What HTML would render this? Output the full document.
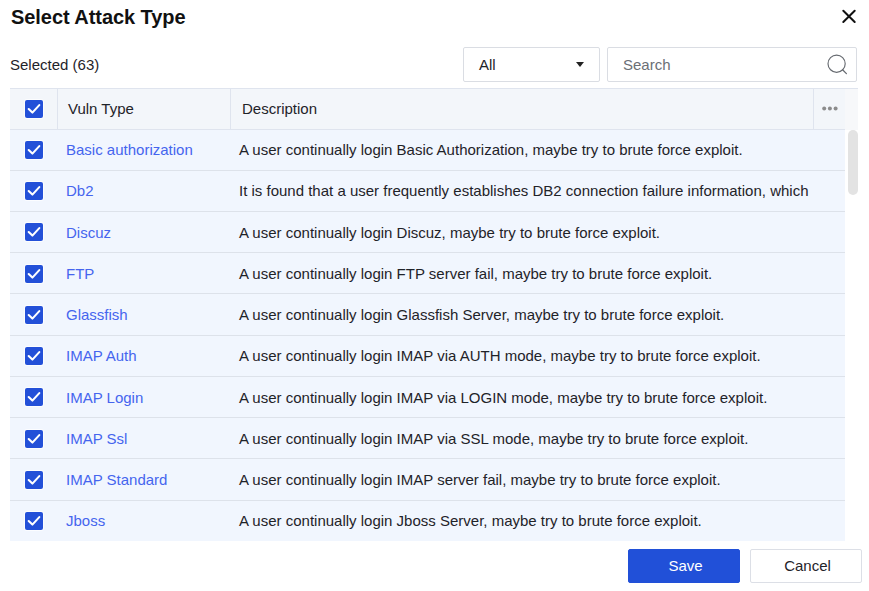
<!DOCTYPE html>
<html><head><meta charset="utf-8">
<style>
*{box-sizing:border-box;margin:0;padding:0}
html,body{width:869px;height:591px;overflow:hidden;background:#fff;font-family:"Liberation Sans",sans-serif;color:#1f2329}
div,svg{position:absolute}
.title{left:11px;top:5px;font-size:20px;font-weight:bold;color:#111;line-height:24px;white-space:nowrap;letter-spacing:-0.06px}
.sel{left:10px;top:57px;font-size:15px;line-height:16px;color:#1f2329;white-space:nowrap}
.dd{left:463px;top:47px;width:137px;height:35px;border:1px solid #dadde3;border-radius:2px}
.dd span{position:absolute;left:15px;top:9px;font-size:15px;line-height:16px;color:#1f2329}
.dd i{position:absolute;left:112px;top:14px;width:0;height:0;border-left:4px solid transparent;border-right:4px solid transparent;border-top:5px solid #222}
.search{left:607px;top:47px;width:250px;height:35px;border:1px solid #dadde3;border-radius:2px}
.search span{position:absolute;left:15px;top:9px;font-size:15px;line-height:16px;color:#6b6f76}
.hdr{left:10px;top:88px;width:835px;height:42px;background:#f3f6fa;border-top:1px solid #dfe4ee;border-bottom:1px solid #dfe4ee}
.gut{left:845px;top:88px;width:13px;height:42px;background:#f7f8fa;border-top:1px solid #dfe4ee}
.vs{top:89px;width:1px;height:40px;background:#dfe4ee}
.row{left:10px;width:835px;background:#f1f6fe;border-bottom:1px solid #dde2ea}
.cb{left:25px;width:18px;height:18px;background:#2350d8;border-radius:2px;box-shadow:0 0 0 1px rgba(255,255,255,.75)}
.cb svg{left:0;top:0}
.t{font-size:15px;line-height:16px;white-space:nowrap}
.vt{left:66px;color:#4565ee}
.ds{left:239px;color:#1f2329}
.sb{left:848px;top:130px;width:10px;height:65px;background:#e3e3e3;border-radius:5px}
.btn{top:549px;height:34px;width:112px;border-radius:2px;font-size:15px;line-height:32px;text-align:center;padding-left:3px}
.save{left:628px;background:#2150d8;color:#fff;border:1px solid #2150d8}
.cancel{left:750px;background:#fff;color:#1f2329;border:1px solid #dcdfe6}
</style></head><body>
<div class="title">Select Attack Type</div>
<svg style="left:838px;top:4px" width="22" height="22" viewBox="0 0 22 22"><path d="M5.3 6.8L16.7 18M16.7 6.8L5.3 18" stroke="#111" stroke-width="2" stroke-linecap="round"/></svg>
<div class="sel">Selected (63)</div>
<div class="dd"><span>All</span><i></i></div>
<div class="search"><span>Search</span></div>
<svg style="left:820px;top:48px" width="40" height="32" viewBox="0 0 40 32"><circle cx="16.6" cy="15.7" r="8.6" fill="none" stroke="#666a70" stroke-width="1.15"/><path d="M22.6 21.8L26.4 25.6" stroke="#666a70" stroke-width="1.25" stroke-linecap="round"/></svg>
<div class="hdr"></div>
<div class="gut"></div>
<div class="vs" style="left:57px"></div>
<div class="vs" style="left:230px"></div>
<div class="vs" style="left:813px"></div>
<div class="cb" style="top:100px"><svg width="18" height="18" viewBox="0 0 18 18"><path d="M3.7 9.0L7.4 12.6L14.3 5.1" fill="none" stroke="#fff" stroke-width="2.1" stroke-linecap="round" stroke-linejoin="round"/></svg></div>
<div class="t" style="left:68px;top:101px;color:#1f2329">Vuln Type</div>
<div class="t" style="left:242px;top:101px;color:#1f2329">Description</div>
<svg style="left:820px;top:104px" width="20" height="9" viewBox="0 0 20 9"><circle cx="4.2" cy="4.4" r="2" fill="#8c8c8c"/><circle cx="9.9" cy="4.4" r="2" fill="#8c8c8c"/><circle cx="15.6" cy="4.4" r="2" fill="#8c8c8c"/></svg>
<div class="row" style="top:130px;height:41px"></div>
<div class="cb" style="top:141px"><svg width="18" height="18" viewBox="0 0 18 18"><path d="M3.7 9.0L7.4 12.6L14.3 5.1" fill="none" stroke="#fff" stroke-width="2.1" stroke-linecap="round" stroke-linejoin="round"/></svg></div>
<div class="t vt" style="top:142px">Basic authorization</div><div class="t ds" style="top:142px">A user continually login Basic Authorization, maybe try to brute force exploit.</div>
<div class="row" style="top:171px;height:41px"></div>
<div class="cb" style="top:182px"><svg width="18" height="18" viewBox="0 0 18 18"><path d="M3.7 9.0L7.4 12.6L14.3 5.1" fill="none" stroke="#fff" stroke-width="2.1" stroke-linecap="round" stroke-linejoin="round"/></svg></div>
<div class="t vt" style="top:183px">Db2</div><div class="t ds" style="top:183px">It is found that a user frequently establishes DB2 connection failure information, which</div>
<div class="row" style="top:212px;height:41px"></div>
<div class="cb" style="top:223px"><svg width="18" height="18" viewBox="0 0 18 18"><path d="M3.7 9.0L7.4 12.6L14.3 5.1" fill="none" stroke="#fff" stroke-width="2.1" stroke-linecap="round" stroke-linejoin="round"/></svg></div>
<div class="t vt" style="top:225px">Discuz</div><div class="t ds" style="top:225px">A user continually login Discuz, maybe try to brute force exploit.</div>
<div class="row" style="top:253px;height:41px"></div>
<div class="cb" style="top:265px"><svg width="18" height="18" viewBox="0 0 18 18"><path d="M3.7 9.0L7.4 12.6L14.3 5.1" fill="none" stroke="#fff" stroke-width="2.1" stroke-linecap="round" stroke-linejoin="round"/></svg></div>
<div class="t vt" style="top:266px">FTP</div><div class="t ds" style="top:266px">A user continually login FTP server fail, maybe try to brute force exploit.</div>
<div class="row" style="top:294px;height:42px"></div>
<div class="cb" style="top:306px"><svg width="18" height="18" viewBox="0 0 18 18"><path d="M3.7 9.0L7.4 12.6L14.3 5.1" fill="none" stroke="#fff" stroke-width="2.1" stroke-linecap="round" stroke-linejoin="round"/></svg></div>
<div class="t vt" style="top:307px">Glassfish</div><div class="t ds" style="top:307px">A user continually login Glassfish Server, maybe try to brute force exploit.</div>
<div class="row" style="top:336px;height:41px"></div>
<div class="cb" style="top:347px"><svg width="18" height="18" viewBox="0 0 18 18"><path d="M3.7 9.0L7.4 12.6L14.3 5.1" fill="none" stroke="#fff" stroke-width="2.1" stroke-linecap="round" stroke-linejoin="round"/></svg></div>
<div class="t vt" style="top:348px">IMAP Auth</div><div class="t ds" style="top:348px">A user continually login IMAP via AUTH mode, maybe try to brute force exploit.</div>
<div class="row" style="top:377px;height:41px"></div>
<div class="cb" style="top:388px"><svg width="18" height="18" viewBox="0 0 18 18"><path d="M3.7 9.0L7.4 12.6L14.3 5.1" fill="none" stroke="#fff" stroke-width="2.1" stroke-linecap="round" stroke-linejoin="round"/></svg></div>
<div class="t vt" style="top:390px">IMAP Login</div><div class="t ds" style="top:390px">A user continually login IMAP via LOGIN mode, maybe try to brute force exploit.</div>
<div class="row" style="top:418px;height:41px"></div>
<div class="cb" style="top:430px"><svg width="18" height="18" viewBox="0 0 18 18"><path d="M3.7 9.0L7.4 12.6L14.3 5.1" fill="none" stroke="#fff" stroke-width="2.1" stroke-linecap="round" stroke-linejoin="round"/></svg></div>
<div class="t vt" style="top:431px">IMAP Ssl</div><div class="t ds" style="top:431px">A user continually login IMAP via SSL mode, maybe try to brute force exploit.</div>
<div class="row" style="top:459px;height:42px"></div>
<div class="cb" style="top:471px"><svg width="18" height="18" viewBox="0 0 18 18"><path d="M3.7 9.0L7.4 12.6L14.3 5.1" fill="none" stroke="#fff" stroke-width="2.1" stroke-linecap="round" stroke-linejoin="round"/></svg></div>
<div class="t vt" style="top:472px">IMAP Standard</div><div class="t ds" style="top:472px">A user continually login IMAP server fail, maybe try to brute force exploit.</div>
<div class="row" style="top:501px;height:40px;border-bottom:0"></div>
<div class="cb" style="top:512px"><svg width="18" height="18" viewBox="0 0 18 18"><path d="M3.7 9.0L7.4 12.6L14.3 5.1" fill="none" stroke="#fff" stroke-width="2.1" stroke-linecap="round" stroke-linejoin="round"/></svg></div>
<div class="t vt" style="top:513px">Jboss</div><div class="t ds" style="top:513px">A user continually login Jboss Server, maybe try to brute force exploit.</div>
<div class="sb"></div>
<div class="btn save">Save</div>
<div class="btn cancel">Cancel</div>
</body></html>
